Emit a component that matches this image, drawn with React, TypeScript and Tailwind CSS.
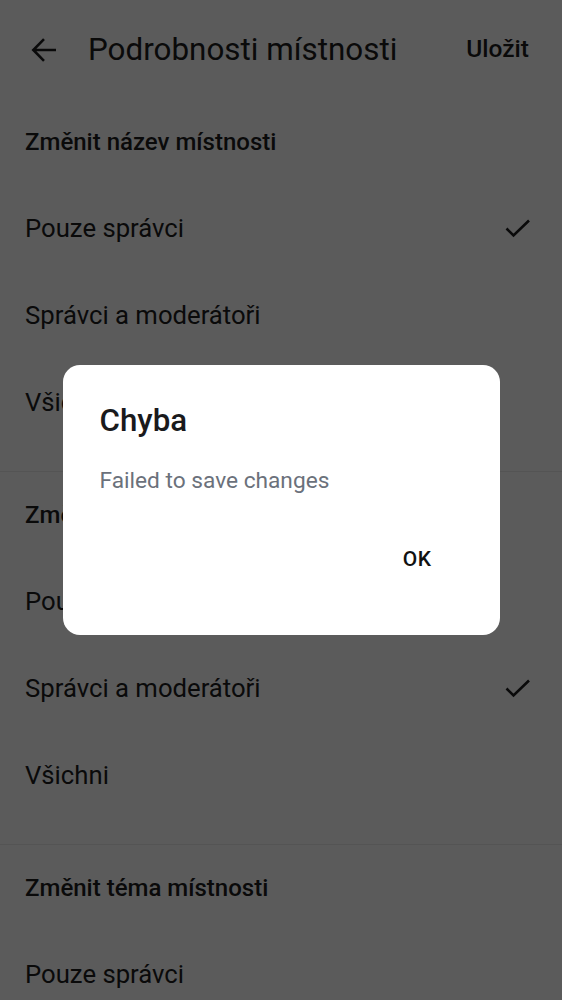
export default function App() {
  const options = ["Pouze správci", "Správci a moderátoři", "Všichni"];
  // last section is cut by the screen edge: only its first row shows
  const sections = [
    { title: "Změnit název místnosti", selected: 0, divider: true, rows: options },
    { title: "Změnit avatar místnosti", selected: 1, divider: true, rows: options },
    { title: "Změnit téma místnosti", selected: 1, divider: false, rows: options.slice(0, 1) },
  ];

  return (
    <div className="relative h-screen w-full overflow-hidden bg-white font-['Roboto',sans-serif] text-[#1c1c1e]">
      {/* top bar */}
      <div className="flex h-[99px] items-center pl-[31px] pr-[33px]">
        <svg width="26" height="26" viewBox="0 0 26 26" fill="none" stroke="currentColor" strokeWidth="2.6">
          <path d="M25 13H2.5M13 2.2 2.3 13 13 23.8" />
        </svg>
        <h1 className="ml-[31px] flex-1 text-[31.4px] leading-none">Podrobnosti místnosti</h1>
        <button className="text-[24.5px] font-medium leading-none">Uložit</button>
      </div>

      {sections.map((s) => (
        <div key={s.title} className={s.divider ? "border-b border-[#ebebeb] pb-[25px]" : ""}>
          <div className="flex h-[86px] items-center px-[25px] text-[24px] font-medium">{s.title}</div>
          {s.rows.map((o, i) => (
            <div key={o} className="flex h-[87px] items-center justify-between pl-[25px] pr-[31px] text-[25.7px]">
              <span>{o}</span>
              {i === s.selected && (
                <svg width="26" height="20" viewBox="0 0 26 20" fill="none" stroke="currentColor" strokeWidth="2.6">
                  <path d="M1.5 9.5 8.5 16.5 24 1.5" />
                </svg>
              )}
            </div>
          ))}
        </div>
      ))}

      {/* scrim */}
      <div className="absolute inset-0 flex items-center justify-center bg-black/[0.645]">
        <div className="mt-[-1px] flex h-[270px] w-[437px] flex-col rounded-[17px] bg-white px-[37px] pt-[38px]">
          <h2 className="text-[31.3px] font-medium leading-[36px] text-[#1a1a1c]">Chyba</h2>
          <p className="mt-[28px] text-[22.7px] leading-[28px] text-[#6b717b]">Failed to save changes</p>
          <div className="mt-[51px] flex justify-end pr-[31px]">
            <button className="text-[21px] font-medium leading-[26px] tracking-[0.5px] text-[#111]">OK</button>
          </div>
        </div>
      </div>
    </div>
  );
}
